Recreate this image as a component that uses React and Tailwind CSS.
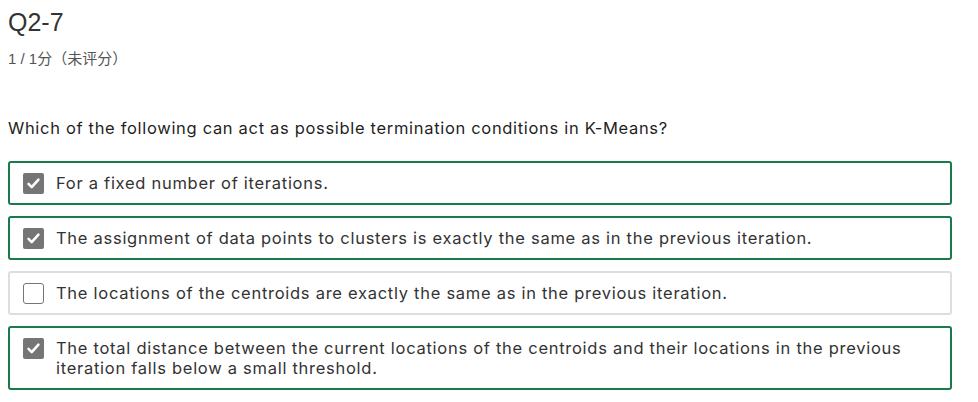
import React from "react";

const options = [
  { text: "For a fixed number of iterations.", checked: true },
  {
    text: "The assignment of data points to clusters is exactly the same as in the previous iteration.",
    checked: true,
  },
  { text: "The locations of the centroids are exactly the same as in the previous iteration.", checked: false },
  {
    text: "The total distance between the current locations of the centroids and their locations in the previous iteration falls below a small threshold.",
    checked: true,
  },
];

function Box({ checked }) {
  if (!checked) {
    return <span className="block h-[21px] w-[21px] shrink-0 rounded-[3px] border border-[#757575] bg-white" />;
  }
  return (
    <span className="flex h-[21px] w-[21px] shrink-0 items-center justify-center rounded-[2px] bg-[#757575]">
      <svg viewBox="0 0 24 24" className="h-[17px] w-[17px]" fill="none" stroke="white" strokeWidth="3.6" strokeLinecap="round" strokeLinejoin="round">
        <path d="M5 12.5l4.5 4.5L19 6.5" />
      </svg>
    </span>
  );
}

export default function App() {
  return (
    <div className="min-h-[402px] w-[978px] bg-white px-2 pt-[6px] font-['Inter','Noto_Sans_CJK_SC',sans-serif] text-[#1f1f1f]">
      <h1 className="font-['Liberation_Sans','Noto_Sans_CJK_SC',sans-serif] text-[25px] leading-[32px] text-[#333]">Q2-7</h1>
      <p className="mt-[11px] font-['Liberation_Sans','Noto_Sans_CJK_SC',sans-serif] text-[15px] leading-[20px] text-[#555]">1 / 1分（未评分）</p>
      <p className="mt-[47px] text-[16.5px] leading-[24px] tracking-[0.68px] text-[#1f1f1f]">
        Which of the following can act as possible termination conditions in K-Means?
      </p>
      <div className="mt-[21px] flex w-[944px] flex-col gap-[11px]">
        {options.map((o, i) => (
          <div
            key={i}
            className={
              "flex items-start gap-[12px] rounded-[3px] border-2 py-[10px] pl-[13px] pr-4 " +
              (o.checked ? "border-[#1a7a4c]" : "border-[#dedede]")
            }
          >
            <span className="flex h-[20px] items-center">
              <Box checked={o.checked} />
            </span>
            <span className="pr-[30px] text-[16.5px] leading-[20px] tracking-[0.72px] text-[#333]">{o.text}</span>
          </div>
        ))}
      </div>
    </div>
  );
}
